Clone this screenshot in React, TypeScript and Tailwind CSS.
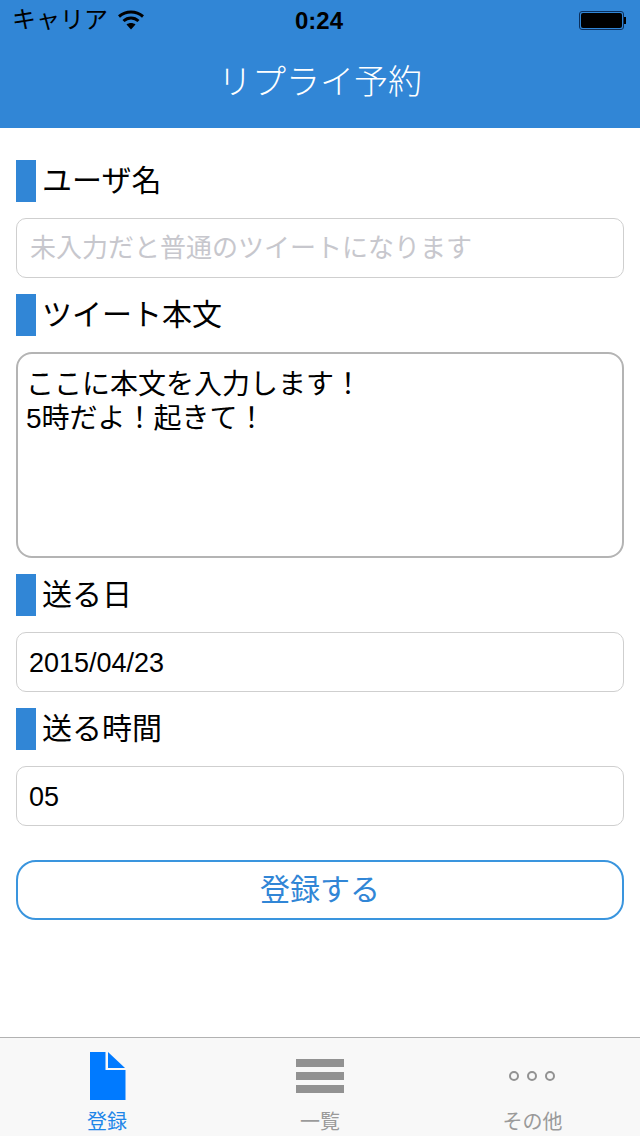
import React from 'react';

const font = "font-['Liberation_Sans','Noto_Sans_CJK_JP',sans-serif]";

const Label = ({ text }: { text: string }) => (
  <div className="flex items-center h-[42px]">
    <div className="w-5 h-[42px] bg-[#3186d6]" />
    <span className="ml-[6px] text-[30px] leading-none text-black">{text}</span>
  </div>
);

const Field = ({ text, placeholder }: { text: string; placeholder?: boolean }) => (
  <div
    className={`mt-4 h-[60px] flex items-center rounded-[10px] border border-[#cfcfcf] leading-none ${
      placeholder ? 'pl-[13px] text-[#c7c7cd] text-[26px]' : 'pl-[12px] pt-[2px] text-black text-[27px]'
    }`}
  >
    {text}
  </div>
);

const App = () => {
  return (
    <div className={`${font} w-[640px] h-[1136px] bg-white flex flex-col overflow-hidden`}>
      <header className="h-[128px] bg-[#3186d6] shrink-0 flex flex-col">
        <div className="h-10 flex items-center justify-between pl-3 pr-[14px] text-black">
          <div className="flex items-center w-[200px]">
            <span className="text-[24px] leading-none">キャリア</span>
            <svg className="ml-[10px]" width="26" height="20" viewBox="0 0 26 20" fill="none">
              <path d="M1 6.5C8 0.5 18 0.5 25 6.5" stroke="#000" strokeWidth="3" />
              <path d="M5.5 11C10 7 16 7 20.5 11" stroke="#000" strokeWidth="3" />
              <path d="M13 19.5L8.5 14.5C11 12.5 15 12.5 17.5 14.5Z" fill="#000" />
            </svg>
          </div>
          <span className="pt-[2px] text-[24px] font-bold leading-none">0:24</span>
          <div className="w-[200px] flex justify-end items-center">
            <div className="w-[45px] h-[19px] rounded-[3px] border border-[#0b2f5c] p-[1px]">
              <div className="w-full h-full bg-black rounded-[2px]" />
            </div>
            <div className="w-[2px] h-[7px] bg-black" />
          </div>
        </div>
        <div className="h-[84px] flex items-center justify-center text-white text-[34px] leading-none font-light">
          リプライ予約
        </div>
      </header>

      <main className="flex-1 px-4 pt-8">
        <Label text="ユーザ名" />
        <Field text="未入力だと普通のツイートになります" placeholder />
        <div className="mt-4">
          <Label text="ツイート本文" />
        </div>
        <div className="mt-4 h-[206px] rounded-[16px] border-2 border-[#b4b4b4] pl-2 pt-[14px] text-[28px] leading-[34px] text-black">
          <div>ここに本文を入力します！</div>
          <div>5時だよ！起きて！</div>
        </div>
        <div className="mt-4">
          <Label text="送る日" />
        </div>
        <Field text="2015/04/23" />
        <div className="mt-4">
          <Label text="送る時間" />
        </div>
        <Field text="05" />
        <button className="mt-[34px] w-full h-[60px] rounded-[20px] border-2 border-[#3a95de] text-[#3186d6] text-[30px] leading-none">
          登録する
        </button>
      </main>

      <nav className="h-[99px] shrink-0 bg-[#f8f8f8] border-t border-[#b2b2b2] grid grid-cols-[215px_210px_215px] text-[20px] leading-none">
        <div className="flex flex-col items-center text-[#1f86e8]">
          <svg className="mt-[14px]" width="36" height="48" viewBox="0 0 36 48">
            <path d="M0 0H15.5V18H35.5V48H0Z" fill="#007aff" />
            <path d="M18 0L35 16H18Z" fill="#007aff" />
          </svg>
          <span className="mt-[12px] -ml-[1px]">登録</span>
        </div>
        <div className="flex flex-col items-center text-[#9a9a9a]">
          <div className="mt-[21px] h-[34px] flex flex-col justify-between">
            <div className="w-12 h-2 bg-[#929292]" />
            <div className="w-12 h-2 bg-[#929292]" />
            <div className="w-12 h-2 bg-[#929292]" />
          </div>
          <span className="mt-[19px]">一覧</span>
        </div>
        <div className="flex flex-col items-center text-[#9a9a9a]">
          <div className="mt-[33px] h-[11px] flex gap-[8px] -ml-[2px]">
            <div className="w-[10px] h-[10px] rounded-full border-[2.5px] border-[#929292]" />
            <div className="w-[10px] h-[10px] rounded-full border-[2.5px] border-[#929292]" />
            <div className="w-[10px] h-[10px] rounded-full border-[2.5px] border-[#929292]" />
          </div>
          <span className="mt-[30px]">その他</span>
        </div>
      </nav>
    </div>
  );
};

export default App;
